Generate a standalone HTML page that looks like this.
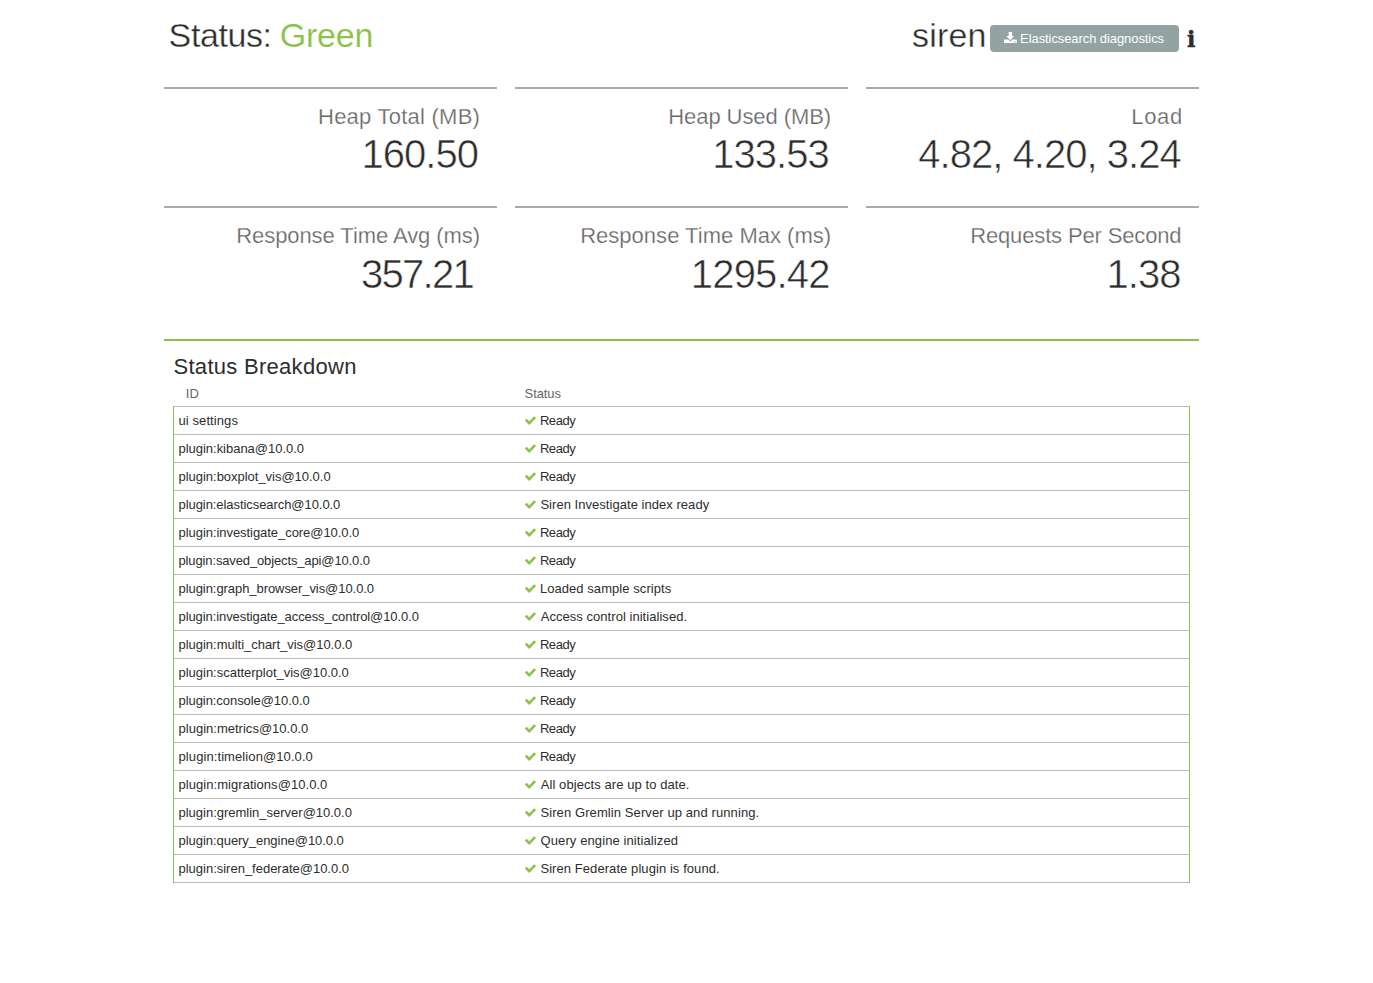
<!DOCTYPE html>
<html lang="en">
<head>
<meta charset="utf-8">
<title>Status</title>
<style>
html,body{margin:0;padding:0;background:#fff;}
body{width:1373px;height:983px;position:relative;overflow:hidden;font-family:"Liberation Sans",sans-serif;color:#2d2d2d;font-size:13px;}
.x{position:absolute;white-space:nowrap;margin:0;font-weight:400;}
.h1{font-size:34px;line-height:40px;color:#2d2d2d;-webkit-text-stroke:0.35px #fff;}
.green{color:#8bc34a;-webkit-text-stroke:0.15px #fff;}
.mt{font-size:22px;line-height:30px;color:#666;-webkit-text-stroke:0.25px #fff;}
.mv{font-size:40px;line-height:44px;color:#2d2d2d;-webkit-text-stroke:0.55px #fff;}
.h3{font-size:22px;line-height:30px;}
.th{font-size:13px;line-height:18px;color:#666;}
.td{font-size:13px;line-height:27px;}
.btnt{font-size:13px;line-height:27px;color:#fff;}
.bar{position:absolute;height:2px;width:333px;background:#aaa;}
#gline{position:absolute;left:164px;top:339px;width:1035px;height:2px;background:#8bc34a;}
#btn{position:absolute;left:990px;top:25px;width:189px;height:27px;background:#92a3a2;border-radius:4px;}
#grid{position:absolute;left:173px;top:406px;width:1017px;height:477px;
 background:repeating-linear-gradient(to bottom,#b9b9b9 0,#b9b9b9 1px,transparent 1px,transparent 28px);}
#info{position:absolute;left:1187px;top:19px;font-family:"DejaVu Serif",serif;font-weight:700;font-size:22px;line-height:40px;color:#2d2d2d;-webkit-text-stroke:0.5px #2d2d2d;}
svg{position:absolute;overflow:visible;}
.vb{position:absolute;top:407px;width:1px;height:476px;background:#8bc34a;}

</style>
</head>
<body>
<header>
<h1 class="x h1" id="h1a" style="left:168.61px;top:15px;letter-spacing:-0.399px">Status:</h1>
<h1 class="x h1 green" id="h1b" style="left:279.77px;top:15px;letter-spacing:-0.212px">Green</h1>
<h1 class="x h1" id="siren" style="left:912.00px;top:15px;letter-spacing:0.180px">siren</h1>
<div id="btn"></div>
<svg id="dl" style="left:1004px;top:32px" width="13" height="12" viewBox="0 0 13 12"><path d="M4.7 0H8V4.1H10.2L6.35 8.2 2.2 4.1H4.7z" fill="#fff"/><path d="M0.5 7.4H4.1L6.35 9.5 8.6 7.4H12.3Q12.8 7.4 12.8 7.9V10.6Q12.8 11.1 12.3 11.1H0.5Q0 11.1 0 10.6V7.9Q0 7.4 0.5 7.4z" fill="#fff"/><rect x="9.5" y="9.3" width="0.9" height="0.9" fill="#92a3a2"/><rect x="11" y="9.3" width="0.9" height="0.9" fill="#92a3a2"/></svg>
<span class="x btnt" id="btnt" style="left:1020.10px;top:25px;letter-spacing:-0.083px">Elasticsearch diagnostics</span>
<div id="info">i</div>
</header>
<section id="metrics">
<div class="bar" style="left:164px;top:87px"></div>
<div class="x mt" id="t1" style="left:318.01px;top:102px;letter-spacing:0.239px">Heap Total (MB)</div>
<div class="x mv" id="v1" style="left:361.39px;top:132px;letter-spacing:-0.950px">160.50</div>
<div class="bar" style="left:515px;top:87px"></div>
<div class="x mt" id="t2" style="left:668.31px;top:102px;letter-spacing:-0.078px">Heap Used (MB)</div>
<div class="x mv" id="v2" style="left:712.19px;top:132px;letter-spacing:-0.975px">133.53</div>
<div class="bar" style="left:866px;top:87px"></div>
<div class="x mt" id="t3" style="left:1131.31px;top:102px;letter-spacing:0.645px">Load</div>
<div class="x mv" id="v3" style="left:918.20px;top:132px;letter-spacing:-0.960px">4.82, 4.20, 3.24</div>
<div class="bar" style="left:164px;top:206px"></div>
<div class="x mt" id="t4" style="left:236.23px;top:221px;letter-spacing:-0.071px">Response Time Avg (ms)</div>
<div class="x mv" id="v4" style="left:360.98px;top:252px;letter-spacing:-1.736px">357.21</div>
<div class="bar" style="left:515px;top:206px"></div>
<div class="x mt" id="t5" style="left:580.21px;top:221px;letter-spacing:0.015px">Response Time Max (ms)</div>
<div class="x mv" id="v5" style="left:690.83px;top:252px;letter-spacing:-0.834px">1295.42</div>
<div class="bar" style="left:866px;top:206px"></div>
<div class="x mt" id="t6" style="left:970.21px;top:221px;letter-spacing:-0.146px">Requests Per Second</div>
<div class="x mv" id="v6" style="left:1106.46px;top:252px;letter-spacing:-0.963px">1.38</div>
</section>
<section id="breakdown">
<div id="gline"></div>
<h3 class="x h3" id="h3" style="left:173.50px;top:352px;letter-spacing:0.288px">Status Breakdown</h3>
<div class="x th" id="thid" style="left:185.65px;top:385px;letter-spacing:0.271px">ID</div>
<div class="x th" id="thst" style="left:524.60px;top:385px;letter-spacing:-0.089px">Status</div>
<div id="grid"></div>
<div class="vb" style="left:173px"></div>
<div class="vb" style="left:1189px"></div>
<div class="x td" id="a1" style="left:178.53px;top:407px;letter-spacing:0.086px">ui settings</div>
<svg class="ck" style="left:524px;top:416px" width="13" height="10" viewBox="0 0 13 10"><path d="M0.7 4.5 L2.6 2.7 L5.2 5.2 L10.2 0.2 L12.1 2 L5.2 9.1 Z" fill="#8bc34a"/></svg>
<div class="x td" id="b1" style="left:539.89px;top:407px;letter-spacing:-0.415px">Ready</div>
<div class="x td" id="a2" style="left:178.53px;top:435px;letter-spacing:-0.025px">plugin:kibana@10.0.0</div>
<svg class="ck" style="left:524px;top:444px" width="13" height="10" viewBox="0 0 13 10"><path d="M0.7 4.5 L2.6 2.7 L5.2 5.2 L10.2 0.2 L12.1 2 L5.2 9.1 Z" fill="#8bc34a"/></svg>
<div class="x td" id="b2" style="left:539.89px;top:435px;letter-spacing:-0.415px">Ready</div>
<div class="x td" id="a3" style="left:178.53px;top:463px;letter-spacing:-0.024px">plugin:boxplot_vis@10.0.0</div>
<svg class="ck" style="left:524px;top:472px" width="13" height="10" viewBox="0 0 13 10"><path d="M0.7 4.5 L2.6 2.7 L5.2 5.2 L10.2 0.2 L12.1 2 L5.2 9.1 Z" fill="#8bc34a"/></svg>
<div class="x td" id="b3" style="left:539.89px;top:463px;letter-spacing:-0.415px">Ready</div>
<div class="x td" id="a4" style="left:178.53px;top:491px;letter-spacing:-0.066px">plugin:elasticsearch@10.0.0</div>
<svg class="ck" style="left:524px;top:500px" width="13" height="10" viewBox="0 0 13 10"><path d="M0.7 4.5 L2.6 2.7 L5.2 5.2 L10.2 0.2 L12.1 2 L5.2 9.1 Z" fill="#8bc34a"/></svg>
<div class="x td" id="b4" style="left:540.40px;top:491px;letter-spacing:0.040px">Siren Investigate index ready</div>
<div class="x td" id="a5" style="left:178.53px;top:519px;letter-spacing:-0.053px">plugin:investigate_core@10.0.0</div>
<svg class="ck" style="left:524px;top:528px" width="13" height="10" viewBox="0 0 13 10"><path d="M0.7 4.5 L2.6 2.7 L5.2 5.2 L10.2 0.2 L12.1 2 L5.2 9.1 Z" fill="#8bc34a"/></svg>
<div class="x td" id="b5" style="left:539.89px;top:519px;letter-spacing:-0.415px">Ready</div>
<div class="x td" id="a6" style="left:178.53px;top:547px;letter-spacing:-0.133px">plugin:saved_objects_api@10.0.0</div>
<svg class="ck" style="left:524px;top:556px" width="13" height="10" viewBox="0 0 13 10"><path d="M0.7 4.5 L2.6 2.7 L5.2 5.2 L10.2 0.2 L12.1 2 L5.2 9.1 Z" fill="#8bc34a"/></svg>
<div class="x td" id="b6" style="left:539.89px;top:547px;letter-spacing:-0.415px">Ready</div>
<div class="x td" id="a7" style="left:178.53px;top:575px;letter-spacing:-0.064px">plugin:graph_browser_vis@10.0.0</div>
<svg class="ck" style="left:524px;top:584px" width="13" height="10" viewBox="0 0 13 10"><path d="M0.7 4.5 L2.6 2.7 L5.2 5.2 L10.2 0.2 L12.1 2 L5.2 9.1 Z" fill="#8bc34a"/></svg>
<div class="x td" id="b7" style="left:539.89px;top:575px;letter-spacing:0.063px">Loaded sample scripts</div>
<div class="x td" id="a8" style="left:178.53px;top:603px;letter-spacing:-0.085px">plugin:investigate_access_control@10.0.0</div>
<svg class="ck" style="left:524px;top:612px" width="13" height="10" viewBox="0 0 13 10"><path d="M0.7 4.5 L2.6 2.7 L5.2 5.2 L10.2 0.2 L12.1 2 L5.2 9.1 Z" fill="#8bc34a"/></svg>
<div class="x td" id="b8" style="left:540.73px;top:603px;letter-spacing:0.042px">Access control initialised.</div>
<div class="x td" id="a9" style="left:178.53px;top:631px;letter-spacing:-0.023px">plugin:multi_chart_vis@10.0.0</div>
<svg class="ck" style="left:524px;top:640px" width="13" height="10" viewBox="0 0 13 10"><path d="M0.7 4.5 L2.6 2.7 L5.2 5.2 L10.2 0.2 L12.1 2 L5.2 9.1 Z" fill="#8bc34a"/></svg>
<div class="x td" id="b9" style="left:539.89px;top:631px;letter-spacing:-0.415px">Ready</div>
<div class="x td" id="a10" style="left:178.53px;top:659px;letter-spacing:-0.016px">plugin:scatterplot_vis@10.0.0</div>
<svg class="ck" style="left:524px;top:668px" width="13" height="10" viewBox="0 0 13 10"><path d="M0.7 4.5 L2.6 2.7 L5.2 5.2 L10.2 0.2 L12.1 2 L5.2 9.1 Z" fill="#8bc34a"/></svg>
<div class="x td" id="b10" style="left:539.89px;top:659px;letter-spacing:-0.415px">Ready</div>
<div class="x td" id="a11" style="left:178.53px;top:687px;letter-spacing:-0.065px">plugin:console@10.0.0</div>
<svg class="ck" style="left:524px;top:696px" width="13" height="10" viewBox="0 0 13 10"><path d="M0.7 4.5 L2.6 2.7 L5.2 5.2 L10.2 0.2 L12.1 2 L5.2 9.1 Z" fill="#8bc34a"/></svg>
<div class="x td" id="b11" style="left:539.89px;top:687px;letter-spacing:-0.415px">Ready</div>
<div class="x td" id="a12" style="left:178.53px;top:715px;letter-spacing:0.013px">plugin:metrics@10.0.0</div>
<svg class="ck" style="left:524px;top:724px" width="13" height="10" viewBox="0 0 13 10"><path d="M0.7 4.5 L2.6 2.7 L5.2 5.2 L10.2 0.2 L12.1 2 L5.2 9.1 Z" fill="#8bc34a"/></svg>
<div class="x td" id="b12" style="left:539.89px;top:715px;letter-spacing:-0.415px">Ready</div>
<div class="x td" id="a13" style="left:178.53px;top:743px;letter-spacing:0.089px">plugin:timelion@10.0.0</div>
<svg class="ck" style="left:524px;top:752px" width="13" height="10" viewBox="0 0 13 10"><path d="M0.7 4.5 L2.6 2.7 L5.2 5.2 L10.2 0.2 L12.1 2 L5.2 9.1 Z" fill="#8bc34a"/></svg>
<div class="x td" id="b13" style="left:539.89px;top:743px;letter-spacing:-0.415px">Ready</div>
<div class="x td" id="a14" style="left:178.53px;top:771px;letter-spacing:0.051px">plugin:migrations@10.0.0</div>
<svg class="ck" style="left:524px;top:780px" width="13" height="10" viewBox="0 0 13 10"><path d="M0.7 4.5 L2.6 2.7 L5.2 5.2 L10.2 0.2 L12.1 2 L5.2 9.1 Z" fill="#8bc34a"/></svg>
<div class="x td" id="b14" style="left:540.73px;top:771px;letter-spacing:0.079px">All objects are up to date.</div>
<div class="x td" id="a15" style="left:178.53px;top:799px;letter-spacing:-0.008px">plugin:gremlin_server@10.0.0</div>
<svg class="ck" style="left:524px;top:808px" width="13" height="10" viewBox="0 0 13 10"><path d="M0.7 4.5 L2.6 2.7 L5.2 5.2 L10.2 0.2 L12.1 2 L5.2 9.1 Z" fill="#8bc34a"/></svg>
<div class="x td" id="b15" style="left:540.40px;top:799px;letter-spacing:0.098px">Siren Gremlin Server up and running.</div>
<div class="x td" id="a16" style="left:178.53px;top:827px;letter-spacing:-0.045px">plugin:query_engine@10.0.0</div>
<svg class="ck" style="left:524px;top:836px" width="13" height="10" viewBox="0 0 13 10"><path d="M0.7 4.5 L2.6 2.7 L5.2 5.2 L10.2 0.2 L12.1 2 L5.2 9.1 Z" fill="#8bc34a"/></svg>
<div class="x td" id="b16" style="left:540.52px;top:827px;letter-spacing:0.103px">Query engine initialized</div>
<div class="x td" id="a17" style="left:178.53px;top:855px;letter-spacing:-0.010px">plugin:siren_federate@10.0.0</div>
<svg class="ck" style="left:524px;top:864px" width="13" height="10" viewBox="0 0 13 10"><path d="M0.7 4.5 L2.6 2.7 L5.2 5.2 L10.2 0.2 L12.1 2 L5.2 9.1 Z" fill="#8bc34a"/></svg>
<div class="x td" id="b17" style="left:540.40px;top:855px;letter-spacing:0.073px">Siren Federate plugin is found.</div>
</section>
</body>
</html>
